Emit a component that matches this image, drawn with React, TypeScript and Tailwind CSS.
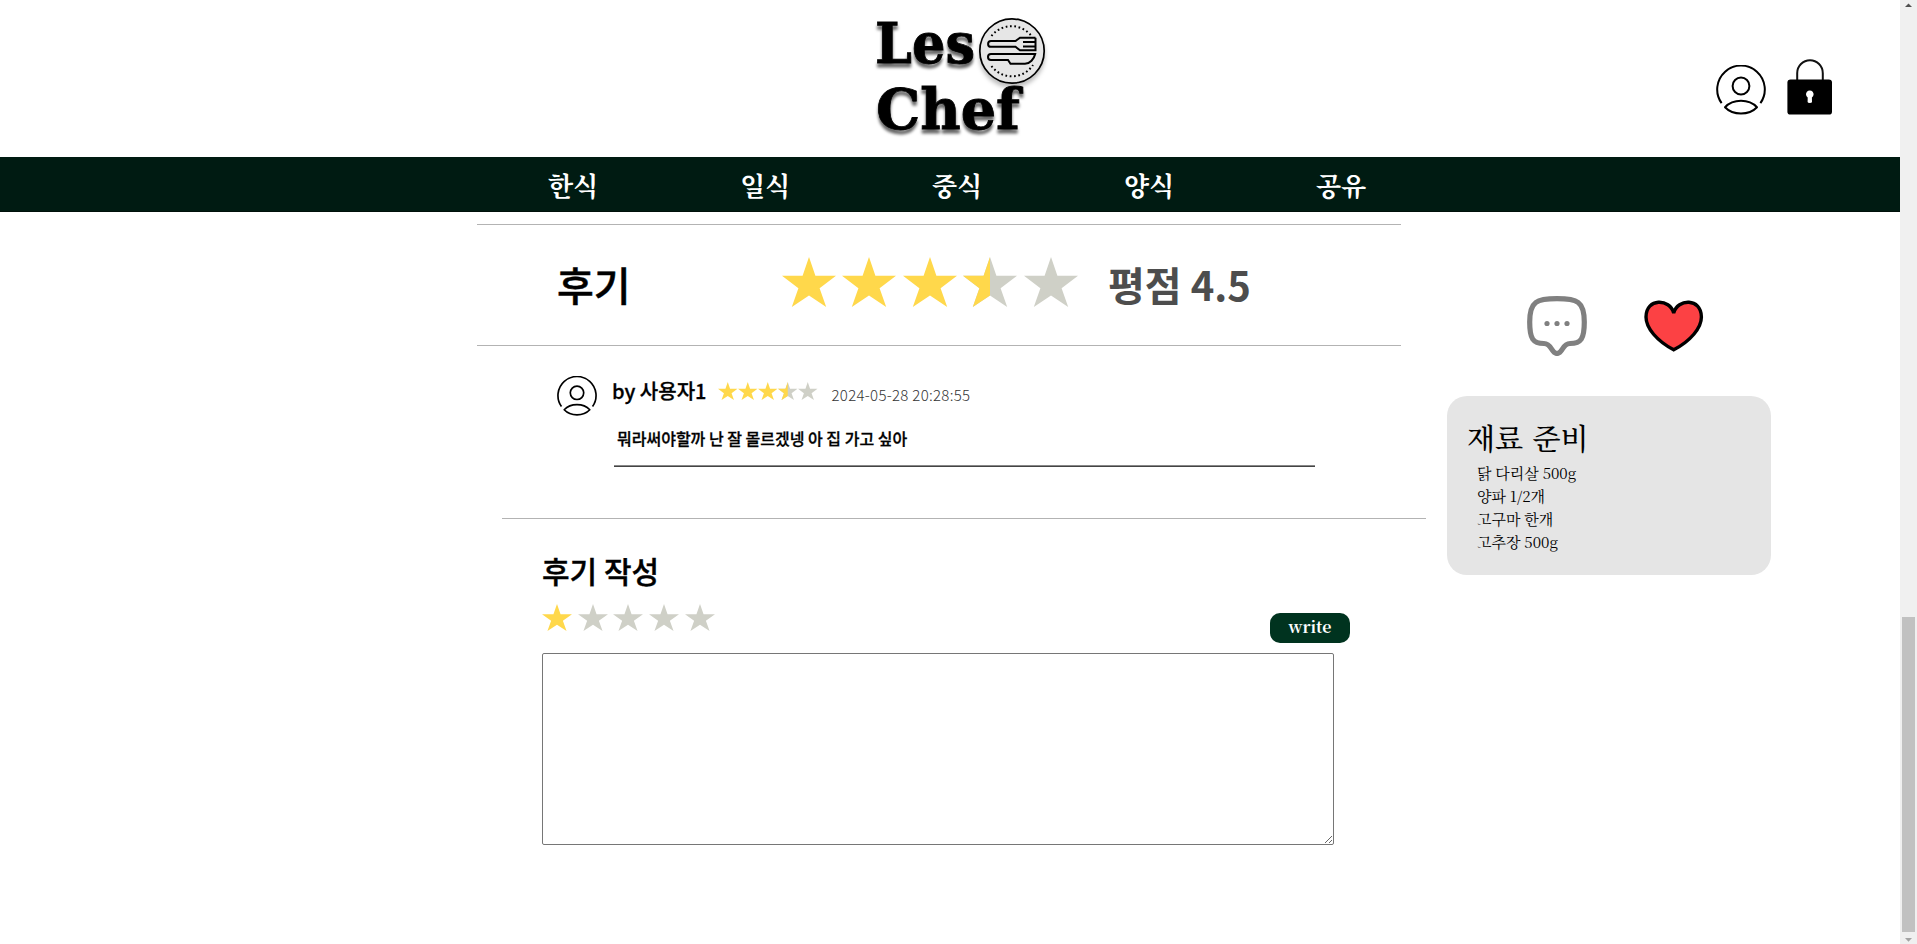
import React from "react";

const STAR = "M27 0 L33.4 19 L54 19 L37.6 31.5 L44.2 50.5 L27 39 L9.8 50.5 L16.4 31.5 L0 19 L20.6 19 Z";

function Star({ fill, className }: { fill: "full" | "half" | "none"; className: string }) {
  return (
    <svg viewBox="0 0 54 50.5" preserveAspectRatio="none" className={`block shrink-0 ${className}`}>
      <path d={STAR} fill={fill === "full" ? "#ffd84b" : "#cfd0c7"} />
      {fill === "half" && (
        <path d="M27 0 L27 39 L9.8 50.5 L16.4 31.5 L0 19 L20.6 19 Z" fill="#ffd84b" />
      )}
    </svg>
  );
}

function Stars({ value, size, gap }: { value: number; size: string; gap: string }) {
  return (
    <div className={`flex ${gap}`}>
      {[1, 2, 3, 4, 5].map((n) => (
        <Star key={n} className={size} fill={value >= n ? "full" : value >= n - 0.5 ? "half" : "none"} />
      ))}
    </div>
  );
}

function UserIcon({ className, stroke }: { className: string; stroke: number }) {
  return (
    <svg viewBox="0 0 50 50" className={`block shrink-0 ${className}`} fill="none" stroke="#000" strokeWidth={stroke}>
      <path d="M5.6 38.2 A23.8 23.8 0 1 1 44.4 38.2" />
      <circle cx="25" cy="21" r="8.4" />
      <path d="M9 42.2 C17 33.6 33 33.6 41 42.2 C33 50.6 17 50.6 9 42.2 Z" strokeLinejoin="round" />
    </svg>
  );
}

function LockIcon() {
  return (
    <svg viewBox="0 0 46 57" className="block h-[57px] w-[46px] shrink-0">
      <path d="M10.2 23 V14.2 A12.8 13 0 0 1 35.8 14.2 V23" fill="none" stroke="#111" strokeWidth="2" />
      <rect x="0.4" y="20.4" width="44.6" height="35.2" rx="3.2" fill="#000" />
      <path d="M20.7 38.4 A3.8 3.8 0 1 1 24.9 38.4 L25 43 Q24.8 44 22.8 44 Q20.8 44 20.6 43 Z" fill="#fff" />
    </svg>
  );
}

function Logo() {
  return (
    <svg viewBox="0 0 200 150" className="block h-[150px] w-[200px] shrink-0">
      <defs>
        <filter id="shade" x="-20%" y="-20%" width="140%" height="150%">
          <feDropShadow dx="0" dy="4" stdDeviation="1.8" floodColor="#000" floodOpacity="0.6" />
        </filter>
        <filter id="soft" x="-20%" y="-20%" width="140%" height="150%">
          <feDropShadow dx="0" dy="4" stdDeviation="2" floodColor="#000" floodOpacity="0.25" />
        </filter>
      </defs>
      <g filter="url(#shade)" fontFamily='"DejaVu Serif", serif' fontWeight="700" fontSize="56" stroke="#000" strokeWidth="0.8">
        <text x="15" y="63" textLength="100" lengthAdjust="spacingAndGlyphs">Les</text>
        <text x="16" y="129" textLength="144" lengthAdjust="spacingAndGlyphs">Chef</text>
      </g>
      <g filter="url(#soft)">
        <circle cx="152" cy="51" r="32.2" fill="#e6e6e6" stroke="#000" strokeWidth="1.7" />
      </g>
      <g fill="none" stroke="#000" strokeWidth="2">
        <path d="M131.5 36 A25.3 25.3 0 0 1 171.5 36" strokeDasharray="1.7 2.6" />
        <path d="M131.5 66 A25.3 25.3 0 0 0 173 65" strokeDasharray="1.7 2.6" />
        <path d="M175.5 37.8 H160 L155.5 41 H131 A2.9 2.9 0 0 0 131 46.8 H155.5 L160 50.3 H175.5 V46.6 H163 M175.5 37.8 V42 H163 M175.5 42 V46.6" />
        <path d="M131 54 H175.2 C174 59 170 63.6 165 63.8 H150.5 L148 60 H131 A2.9 2.9 0 0 1 131 54 Z" />
      </g>
    </svg>
  );
}

const CATEGORIES = ["한식", "일식", "중식", "양식", "공유"];
const INGREDIENTS = ["닭 다리살 500g", "양파 1/2개", "고구마 한개", "고추장 500g"];

function Header() {
  return (
    <>
      <header className="flex h-[157px]">
        <div className="ml-[860px]"><Logo /></div>
        <div className="mt-[59px] ml-[656px] flex gap-[21px]">
          <UserIcon className="mt-[6px] size-[50px]" stroke={2} />
          <LockIcon />
        </div>
      </header>
      <nav className="flex h-[55px] items-center border-b border-[#00100a] bg-[#001b12] pl-[477px] font-['Noto_Serif_CJK_KR','Noto_Sans_CJK_KR',serif] text-[26px] leading-[55px] font-bold text-white">
        {CATEGORIES.map((name) => (
          <span key={name} className="w-[192px] text-center">{name}</span>
        ))}
      </nav>
    </>
  );
}

function Review() {
  return (
    <article className="flex h-[172px] pt-[29px] pl-[80px]">
      <UserIcon className="mt-[1px] size-[40px]" stroke={2.1} />
      <div className="ml-[15px]">
        <div className="flex h-[36px]">
          <span className="w-[106px] text-[20px] leading-[32px] font-medium whitespace-nowrap [-webkit-text-stroke:0.3px_#000]">by 사용자1</span>
          <div className="mt-[7px]"><Stars value={3.5} size="h-[18px] w-[19.5px]" gap="gap-[0.5px]" /></div>
          <span className="ml-[14px] text-[15px] leading-[40px] font-light tracking-[0.3px] whitespace-nowrap text-[#333]">2024-05-28 20:28:55</span>
        </div>
        <p className="mt-[14px] ml-[5px] text-[16px] leading-[26px] font-medium whitespace-nowrap [-webkit-text-stroke:0.3px_#000]">뭐라써야할까 난 잘 몰르겠넹 아 집 가고 싶아</p>
        <div className="mt-[14px] ml-[2px] h-[2px] w-[701px] border-t border-[#888] bg-[#444]" />
      </div>
    </article>
  );
}

function ReviewForm() {
  return (
    <section className="ml-[25px] w-[924px] border-t border-[#b3b3b3] pl-[40px]">
      <h2 className="mt-[29px] h-[47px] text-[30px] leading-[44px] font-medium [-webkit-text-stroke:0.4px_#000]">후기 작성</h2>
      <div className="flex h-[58px] w-[808px] justify-between">
        <div className="mt-[9px]"><Stars value={1} size="h-[27px] w-[30px]" gap="gap-[5.7px]" /></div>
        <button className="mt-[18px] flex h-[30px] w-[80px] justify-center rounded-[10px] bg-[#00331f] font-['Noto_Serif_CJK_KR','Liberation_Serif',serif] text-[16px] leading-[27px] font-bold text-white">write</button>
      </div>
      <textarea className="block h-[192px] w-[792px] rounded-[2px] border border-[#767676] bg-white" />
    </section>
  );
}

function Sidebar() {
  return (
    <aside className="ml-[21px] w-[324px] pt-[84px]">
      <div className="flex h-[100px] pl-[80px]">
        <svg viewBox="0 0 60 60" className="block size-[60px]">
          <path d="M30 2.7 C50 2.7 57.3 5 57.3 26 C57.3 43 54 47.5 43 47.5 C35 47.5 36 57.5 30 57.5 C24 57.5 25 47.5 17 47.5 C6 47.5 2.7 43 2.7 26 C2.7 5 10 2.7 30 2.7 Z" fill="none" stroke="#808080" strokeWidth="5.2" />
          <g fill="#808080"><circle cx="20" cy="27.5" r="2.6" /><circle cx="30" cy="27.5" r="2.6" /><circle cx="40" cy="27.5" r="2.6" /></g>
        </svg>
        <svg viewBox="0 0 60 52" className="mt-[4px] ml-[57px] block h-[52px] w-[60px]">
          <path d="M29.7 13 C26 -1.5 2 -2.5 2 17 C2 28 13 41 29.7 49.8 C46.5 41 57.4 28 57.4 17 C57.4 -2.5 33.4 -1.5 29.7 13 Z" fill="#fc4144" stroke="#000" strokeWidth="3.4" />
        </svg>
      </div>
      <div className="h-[179px] rounded-[20px] bg-[#e5e5e5] pt-[20px] pl-[20px] font-['Noto_Serif_CJK_KR','Noto_Sans_CJK_KR',serif]">
        <h3 className="h-[45px] text-[29px] leading-[44px] font-medium [word-spacing:2px] whitespace-nowrap">재료 준비</h3>
        <ul className="pl-[10px] text-[15px] leading-[23px]">
          {INGREDIENTS.map((item) => <li key={item}>{item}</li>)}
        </ul>
      </div>
    </aside>
  );
}

function ScrollBar() {
  return (
    <div className="flex w-[17px] flex-col items-center bg-[#f0f0f0]">
      <svg viewBox="0 0 17 17" className="block size-[17px]"><path d="M5 7 L8.5 3.5 L12 7 Z" fill="#505050" /></svg>
      <div className="mt-[600px] h-[315px] w-[13px] bg-[#c1c1c1]" />
      <svg viewBox="0 0 17 12" className="block h-[12px] w-[17px]"><path d="M5 6 L12 6 L8.5 9.8 Z" fill="#a3a3a3" /></svg>
    </div>
  );
}

export default function App() {
  return (
    <div className="flex h-[944px] w-[1917px] overflow-hidden bg-white font-['Noto_Sans_CJK_KR',sans-serif] text-black">
      <div className="w-[1900px]">
        <Header />
        <main className="flex">
          <div className="ml-[477px] w-[949px] pt-[12px]">
            <section className="flex h-[122px] w-[924px] border-y border-[#b3b3b3] pl-[80px]">
              <h2 className="mt-[29px] w-[224.5px] text-[40px] leading-[60px] font-medium [-webkit-text-stroke:0.5px_#000]">후기</h2>
              <div className="mt-[32px]"><Stars value={3.5} size="h-[50px] w-[54px]" gap="gap-[6.5px]" /></div>
              <span className="mt-[29px] ml-[30.5px] text-[40px] leading-[60px] font-bold whitespace-nowrap text-[#4d4d4d]">평점 4.5</span>
            </section>
            <Review />
            <ReviewForm />
          </div>
          <Sidebar />
        </main>
      </div>
      <ScrollBar />
    </div>
  );
}
